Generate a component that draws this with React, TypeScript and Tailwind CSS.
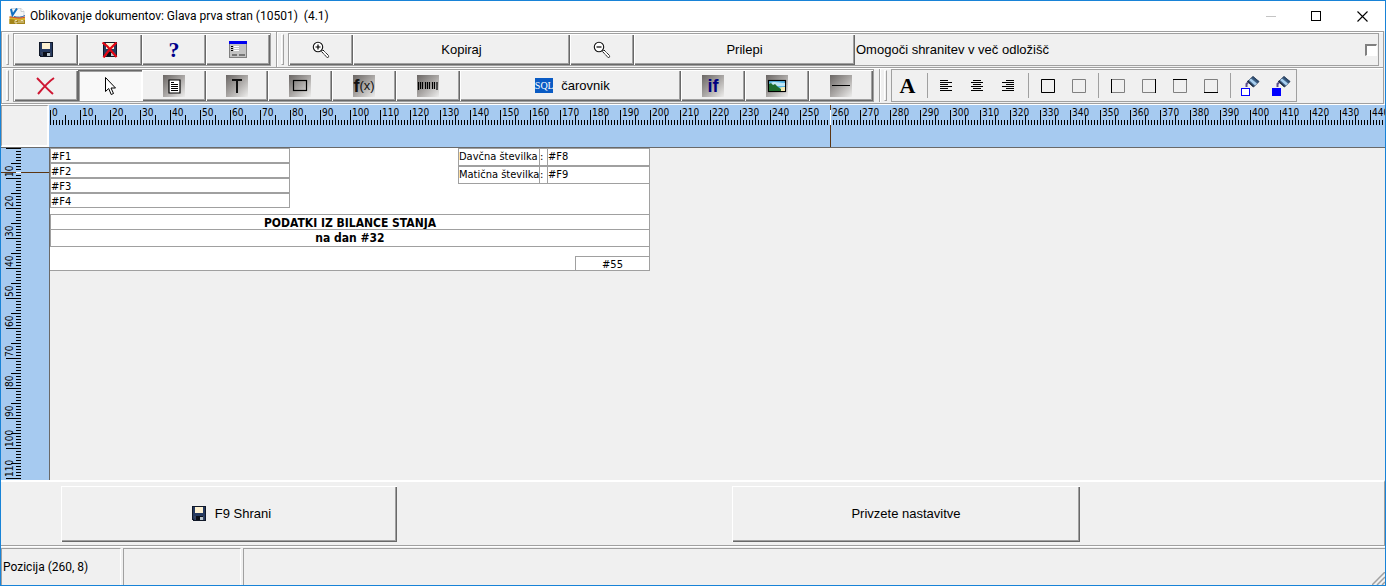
import { useEffect, useState } from "react";
import type { ReactNode } from "react";

const RAISED =
  "shadow-[inset_1px_1px_#ffffff,inset_-1px_-1px_#696969,inset_-2px_-2px_#a0a0a0]";

/* ---------- icons ---------- */

function Floppy({ crossed = false }: { crossed?: boolean }) {
  return (
    <svg width="16" height="16" viewBox="0 0 16 16" shapeRendering="crispEdges" aria-hidden="true">
      <path d="M1 0h14v15H2l-1-1z" fill="#101828" />
      <path d="M2 1h12v13H3l-1-1z" fill="#263a60" />
      <path d="M4 1h8v6H4z" fill="#fdf1d2" />
      <path d="M3 10h10v4H4z" fill="#3a4660" />
      <path d="M5 10h7v4H5z" fill="#0b0f18" />
      <path d="M9 11h3v3H9z" fill="#b9c6cf" />
      {crossed && (
        <path
          d="M0.500 0.500l5 4 9 10.500M14.500 0.500L8 7l-6.500 8.500"
          fill="none"
          stroke="#e30613"
          strokeWidth="2.200"
          shapeRendering="auto"
        />
      )}
    </svg>
  );
}

function AppLogo() {
  return (
    <svg width="17" height="17" viewBox="0 0 17 17" aria-hidden="true">
      <path d="M2 0.500h10l3 3V12H2z" fill="#f4f6f8" stroke="#c5cbd0" strokeWidth="0.7" />
      <path d="M12 0.500v3h3" fill="#ffffff" stroke="#b8bec4" strokeWidth="0.7" />
      <path d="M0.500 8.500c4 0 8 2 15.500 0.500v7H0.500z" fill="#d9b32a" />
      <path d="M0.500 11c4 0 9 2.500 15.500 1v4H0.500z" fill="#a3841a" />
      <path d="M5 8.500c4 1 7 1 11-1" fill="none" stroke="#2f6fb0" strokeWidth="1" />
      <path d="M0.500 9c4-0.500 8 2.500 15.500 0" fill="none" stroke="#d4402a" strokeWidth="1" />
      <path d="M8 12.500H6v2.500h2v-1M10 12.500v2.500M12 15v-2.500h2V15" stroke="#f6eecb" strokeWidth="0.800" fill="none" />
      <path d="M2 1l1.500 6L8 0.500" fill="none" stroke="#0f6ec0" strokeWidth="2" />
    </svg>
  );
}

function FormIcon() {
  return (
    <svg width="18" height="17" viewBox="0 0 18 17" shapeRendering="crispEdges" aria-hidden="true">
      <path d="M0 0h18v17H0z" fill="#808080" />
      <path d="M1 3h16v13H1z" fill="#c3c3c3" />
      <path d="M0 0h18v3H0z" fill="#0000f0" />
      <path d="M2 5h2v1H2zM2 7h2v1H2zM2 9h2v1H2z" fill="#000" />
      <path d="M5 5h5v1H5zM5 7h5v1H5zM5 9h5v1H5z" fill="#fff" />
      <path d="M3 13h5v2H3zM10 13h6v2h-6z" fill="#777" />
    </svg>
  );
}

function Magnifier({ plus = false }: { plus?: boolean }) {
  return (
    <svg width="18" height="18" viewBox="0 0 18 18" aria-hidden="true">
      <path d="M9.500 10.500l1.500-1.500 6 6-1.500 2z" fill="#fff" stroke="#000" strokeWidth="1" strokeDasharray="1.500 0.500" />
      <circle cx="6" cy="6" r="4.700" fill="#fff" stroke="#111" strokeWidth="1.100" />
      <path d={plus ? "M3.500 6h5M6 3.500v5" : "M3.500 6h5"} stroke="#000" strokeWidth="1.200" />
    </svg>
  );
}

function Tile({ children, id }: { children?: ReactNode; id: string }) {
  return (
    <svg width="22" height="22" viewBox="0 0 22 22" aria-hidden="true">
      <defs>
        <linearGradient id={id} x1="0" y1="0" x2="1" y2="1">
          <stop offset="0" stopColor="#6a6664" />
          <stop offset="0.500" stopColor="#a9a6a4" />
          <stop offset="1" stopColor="#ededec" />
        </linearGradient>
      </defs>
      <rect width="22" height="22" fill={`url(#${id})`} />
      {children}
    </svg>
  );
}

function Square({ sides }: { sides: "all" | "none" | "left" | "right" | "top" | "bottom" }) {
  const lines = {
    all: "M0.500 0.500h13v13h-13z",
    none: "",
    left: "M0.500 0v14",
    right: "M13.500 0v14",
    top: "M0 0.500h14",
    bottom: "M0 13.500h14",
  };
  return (
    <svg width="14" height="14" viewBox="0 0 14 14" aria-hidden="true">
      <path d="M0.500 0.500h13v13h-13z" fill="none" stroke="#808080" />
      <path d={lines[sides]} fill="none" stroke="#000" />
    </svg>
  );
}

function AlignIcon({ kind }: { kind: "left" | "center" | "right" }) {
  const widths = [8, 12, 8, 12, 8, 12];
  return (
    <svg width="13" height="12" viewBox="0 0 13 12" shapeRendering="crispEdges" aria-hidden="true">
      {widths.map((w, i) => {
        const x = kind === "left" ? 0 : kind === "center" ? (12 - w) / 2 : 12 - w;
        return <rect key={i} x={x} y={i * 2} width={w} height="1" fill="#000" />;
      })}
    </svg>
  );
}

function Bucket({ filled = false }: { filled?: boolean }) {
  return (
    <svg width="20" height="22" viewBox="0 0 20 22" aria-hidden="true">
      <path d="M13 1.500l6 5-5.500 5.500-6-5.500z" fill="#3f6288" stroke="#2b3d57" />
      <path d="M11 3.500l6 5-2 2-6-5.500z" fill="#a9d0f0" />
      <path d="M13 1.500l6 5-1 1-6-5z" fill="#2d4a6c" />
      <path d="M7.500 6l6 5.500" stroke="#1d2c42" strokeWidth="1.200" />
      <path d="M8 7.500L6.500 9v3" fill="none" stroke="#5a4f8c" strokeWidth="2" />
      <rect x="1.500" y="13.500" width="8" height="7" fill={filled ? "#0000ff" : "#fff"} stroke="#0000ff" />
    </svg>
  );
}

/* ---------- toolbar parts ---------- */

function Grip() {
  return (
    <span className="mr-1 ml-1 h-[31px] w-[3px] shrink-0 border-t border-r border-b border-l border-t-white border-r-[#a0a0a0] border-b-[#a0a0a0] border-l-white" />
  );
}

function Panel({ children, className = "" }: { children: ReactNode; className?: string }) {
  return (
    <div className={`flex h-[33px] border border-[#a0a0a0] ${className}`}>{children}</div>
  );
}

function ToolButton({
  label,
  children,
  className = "w-16",
  pressed = false,
}: {
  label: string;
  children: ReactNode;
  className?: string;
  pressed?: boolean;
}) {
  return (
    <button
      type="button"
      aria-label={label}
      aria-pressed={pressed || undefined}
      className={`flex h-[31px] shrink-0 items-center justify-center ${
        pressed
          ? "bg-[#f9f9f9] shadow-[inset_1px_1px_#696969,inset_2px_2px_#a0a0a0,inset_-1px_-1px_#ffffff]"
          : RAISED
      } ${className}`}
    >
      {children}
    </button>
  );
}

function FlatButton({ label, children }: { label: string; children: ReactNode }) {
  return (
    <button type="button" aria-label={label} className="flex h-[31px] w-[31px] shrink-0 items-center justify-center">
      {children}
    </button>
  );
}

function Divider() {
  return <span className="my-[3px] mr-[3px] ml-1 w-px shrink-0 bg-[#a0a0a0]" />;
}

function BandSplit() {
  return <span className="ml-[5px] w-px shrink-0 self-stretch bg-[#a0a0a0] shadow-[1px_0_#ffffff]" />;
}

/* ---------- rulers ---------- */

const UNIT = 3;

function tickLength(i: number) {
  return i % 10 === 0 ? 15 : i % 5 === 0 ? 10 : 5;
}

function useWindowSize() {
  const [size, setSize] = useState({ width: window.innerWidth, height: window.innerHeight });
  useEffect(() => {
    const update = () => setSize({ width: window.innerWidth, height: window.innerHeight });
    window.addEventListener("resize", update);
    return () => window.removeEventListener("resize", update);
  }, []);
  return size;
}

function HorizontalRuler({ cursor }: { cursor: number }) {
  const { width } = useWindowSize();
  const count = Math.floor((width - 52) / UNIT);
  let ticks = "";
  for (let i = 0; i <= count; i++) ticks += `M${i * UNIT + 1.5} 20v${-tickLength(i)}`;
  const marker = cursor * UNIT + 1.5;
  return (
    <div className="h-[42px] min-w-0 flex-1 overflow-hidden bg-[#a6caf0]">
      <svg width="100%" height="42" className="block" aria-label="Vodoravno ravnilo">
        <path d={ticks} stroke="#000" />
        {Array.from({ length: Math.floor(count / 10) + 1 }, (_, i) => (
          <text key={i} x={i * 10 * UNIT + 3} y="11" className="font-['DejaVu_Sans_Condensed','DejaVu_Sans',sans-serif] text-[10px]">
            {i * 10}
          </text>
        ))}
        <path d={`M${marker} 0v42`} stroke="#5c3512" />
        <path d={`M${marker} 5v15`} stroke="#fff" />
      </svg>
    </div>
  );
}

function VerticalRuler({ cursor }: { cursor: number }) {
  const { height } = useWindowSize();
  const count = Math.floor((height - 254) / UNIT);
  let ticks = "";
  for (let i = 0; i <= count; i++) ticks += `M20 ${i * UNIT + 0.5}h${-tickLength(i)}`;
  const marker = cursor * UNIT + 0.5;
  return (
    <div className="relative w-12 shrink-0 overflow-hidden bg-[#a6caf0]">
      <svg width="48" height="100%" className="absolute top-0 left-0 block" aria-label="Navpično ravnilo">
        <path d={ticks} stroke="#000" />
        {Array.from({ length: Math.floor(count / 10) }, (_, i) => {
          const y = (i + 1) * 10 * UNIT - 1;
          return (
            <text key={i} x="12" y={y} transform={`rotate(-90 12 ${y})`} className="font-['DejaVu_Sans_Condensed','DejaVu_Sans',sans-serif] text-[10px]">
              {(i + 1) * 10}
            </text>
          );
        })}
        <path d={`M0 ${marker}h48`} stroke="#5c3512" />
        <path d={`M15 ${marker}h5`} stroke="#fff" />
      </svg>
    </div>
  );
}

/* ---------- document canvas ---------- */

const FIELDS = [
  { text: "#F1", place: "left-0 top-0 w-[240px] h-[15px]" },
  { text: "#F2", place: "left-0 top-[15px] w-[240px] h-[15px]" },
  { text: "#F3", place: "left-0 top-[30px] w-[240px] h-[15px]" },
  { text: "#F4", place: "left-0 top-[45px] w-[240px] h-[15px]" },
  { text: "Davčna številka", place: "left-[408px] top-0 w-[82px] h-[18px]" },
  { text: ":", place: "left-[489px] top-0 w-[9px] h-[18px]" },
  { text: "#F8", place: "left-[497px] top-0 w-[103px] h-[18px]" },
  { text: "Matična številka", place: "left-[408px] top-[18px] w-[82px] h-[18px]" },
  { text: ":", place: "left-[489px] top-[18px] w-[9px] h-[18px]" },
  { text: "#F9", place: "left-[497px] top-[18px] w-[103px] h-[18px]" },
  { text: "PODATKI IZ BILANCE STANJA", place: "left-0 top-[66px] w-[600px] h-4 text-center text-xs font-bold" },
  { text: "na dan #32", place: "left-0 top-[81px] w-[600px] h-[18px] text-center text-xs font-bold" },
  { text: "#55", place: "left-[525px] top-[108px] w-[75px] h-[15px] text-center" },
];

function Canvas() {
  return (
    <div className="min-w-0 flex-1 overflow-hidden border-l border-[#696969]">
      <div className="relative h-[123px] w-[600px] border-r border-b border-[#a0a0a0] bg-white font-['DejaVu_Sans_Condensed','DejaVu_Sans',sans-serif] text-[11px]">
        {FIELDS.map((f, i) => (
          <div key={i} className={`absolute border border-[#a0a0a0] leading-4 whitespace-nowrap ${f.place}`}>
            {f.text}
          </div>
        ))}
      </div>
    </div>
  );
}

/* ---------- window ---------- */

export default function App() {
  return (
    <div className="flex min-h-screen flex-col border border-[#1883d7] bg-[#f0f0f0] font-['Liberation_Sans',Arial,sans-serif] text-[13px] text-black">
      <header className="flex h-[30px] items-center bg-white pl-2 font-['Roboto','Open_Sans',sans-serif] text-[12px]">
        <AppLogo />
        <h1 className="ml-1 flex-1 whitespace-pre">Oblikovanje dokumentov: Glava prva stran (10501)  (4.1)</h1>
        <button type="button" aria-label="Pomanjšaj" className="flex h-full w-[45px] items-center justify-center">
          <span className="h-px w-[10px] bg-[#c4c4c4]" />
        </button>
        <button type="button" aria-label="Povečaj" className="flex h-full w-[46px] items-center justify-center">
          <span className="h-[10px] w-[10px] border border-black" />
        </button>
        <button type="button" aria-label="Zapri" className="flex h-full w-[46px] items-center justify-center">
          <svg width="11" height="11" viewBox="0 0 11 11" aria-hidden="true">
            <path d="M0.500 0.500l10 10M10.500 0.500l-10 10" stroke="#000" strokeWidth="1.100" />
          </svg>
        </button>
      </header>

      <div className="mr-px border border-[#a0a0a0] shadow-[inset_1px_1px_#ffffff]">
        <div className="flex items-center border-b border-[#a0a0a0]">
          <div className="flex flex-none items-center py-px">
            <Grip />
            <Panel>
              <ToolButton label="Shrani"><Floppy /></ToolButton>
              <ToolButton label="Zapri brez shranjevanja"><Floppy crossed /></ToolButton>
              <ToolButton label="Pomoč">
                <span className="font-['Liberation_Serif',serif] text-[22px] leading-none font-bold text-[#00008b]">?</span>
              </ToolButton>
              <ToolButton label="Lastnosti"><FormIcon /></ToolButton>
            </Panel>
          </div>
          <BandSplit />
          <div className="flex min-w-0 flex-1 items-center py-px pr-1">
            <Grip />
            <Panel className="min-w-0 flex-1">
              <ToolButton label="Povečava"><Magnifier plus /></ToolButton>
              <ToolButton label="Kopiraj" className="w-[217px]">Kopiraj</ToolButton>
              <ToolButton label="Pomanjšava"><Magnifier /></ToolButton>
              <ToolButton label="Prilepi" className="w-[221px]">Prilepi</ToolButton>
              <label className="flex min-w-0 flex-1 items-center justify-between pr-px pl-px">
                <span className="whitespace-nowrap">Omogoči shranitev v več odložišč</span>
                <input
                  type="checkbox"
                  className="h-3 w-3 appearance-none border-t-2 border-r border-b border-l-2 border-t-[#808080] border-r-white border-b-white border-l-[#808080] bg-white"
                />
              </label>
            </Panel>
          </div>
        </div>

        <div className="flex items-center border-t border-white pb-px">
          <div className="flex items-center">
            <Grip />
            <Panel>
              <ToolButton label="Briši">
                <svg width="20" height="20" viewBox="0 0 20 20" aria-hidden="true">
                  <path d="M1 2c5 5 10 11 16 16M18 2C12 6 7 12 2 18" fill="none" stroke="#cf1632" strokeWidth="2" />
                </svg>
              </ToolButton>
              <ToolButton label="Izbira" pressed>
                <svg width="13" height="20" viewBox="0 0 13 20" aria-hidden="true">
                  <path d="M1.500 1.500v14l3.200-3 2.500 6 2.300-1-2.500-5.500h4.500z" fill="#fff" stroke="#000" />
                </svg>
              </ToolButton>
              <ToolButton label="Besedilo">
                <Tile id="tile-memo">
                  <path d="M6 5h11v13H6z" fill="#fff" stroke="#000" strokeWidth="1.200" />
                  <path d="M8 7.500h3M8 9.500h7M8 11.500h7M8 13.500h7M8 15.500h7" stroke="#000" />
                </Tile>
              </ToolButton>
              <ToolButton label="Napis" className="w-[62px]">
                <Tile id="tile-text">
                  <path d="M6 4h10v2h-4v12h-2V6H6z" fill="#111" />
                </Tile>
              </ToolButton>
              <ToolButton label="Okvir">
                <Tile id="tile-box">
                  <rect x="4.500" y="5.500" width="13" height="10" fill="none" stroke="#000" strokeWidth="1.200" />
                </Tile>
              </ToolButton>
              <ToolButton label="Formula">
                <span className="flex h-[22px] w-[22px] items-center justify-center bg-linear-to-br from-[#6a6664] via-[#a9a6a4] to-[#ededec] text-[13px] leading-none text-[#111]">
                  <b className="text-[18px]">f</b>(x)
                </span>
              </ToolButton>
              <ToolButton label="Črtna koda">
                <Tile id="tile-barcode">
                  <path
                    d="M1.500 7v8M3.500 7v7M5.500 7v7M8.500 7v7M10.500 7v7M12.500 7v7M15.500 7v7M17.500 7v7M20 7v8"
                    stroke="#000"
                    strokeWidth="1.200"
                  />
                </Tile>
              </ToolButton>
              <ToolButton label="SQL čarovnik" className="w-[221px] gap-2 pl-1">
                <span className="flex h-[15px] w-[18px] items-center justify-center bg-[#0a5bc4] font-['Liberation_Serif',serif] text-[10px] leading-none text-white">
                  SQL
                </span>
                čarovnik
              </ToolButton>
              <ToolButton label="Pogoj">
                <span className="flex h-[22px] w-[22px] items-center justify-center bg-linear-to-br from-[#6a6664] via-[#a9a6a4] to-[#ededec] text-[18px] leading-none font-bold text-[#000080]">
                  if
                </span>
              </ToolButton>
              <ToolButton label="Slika">
                <Tile id="tile-image">
                  <rect x="2.500" y="5.500" width="17" height="11" fill="#58b8e8" stroke="#000" strokeWidth="1.200" />
                  <path d="M3 9c5-4 9-1 16-1v3H3z" fill="#bfe6f5" />
                  <path d="M19 12c-6 0-8 2-9 4h9z" fill="#f4e9b0" />
                  <path d="M3 9l2-1 2 2 2-1 3 3 3 2v2H3z" fill="#1d6b2e" />
                </Tile>
              </ToolButton>
              <ToolButton label="Črta">
                <Tile id="tile-line">
                  <path d="M2 10.500h18" stroke="#000" />
                </Tile>
              </ToolButton>
            </Panel>
          </div>
          <BandSplit />
          <div className="flex items-center">
            <Grip />
            <Panel>
              <FlatButton label="Pisava">
                <span className="font-['Liberation_Serif',serif] text-[22px] leading-none font-bold">A</span>
              </FlatButton>
              <Divider />
              <FlatButton label="Poravnaj levo"><AlignIcon kind="left" /></FlatButton>
              <FlatButton label="Poravnaj na sredino"><AlignIcon kind="center" /></FlatButton>
              <FlatButton label="Poravnaj desno"><AlignIcon kind="right" /></FlatButton>
              <Divider />
              <FlatButton label="Vsi robovi"><Square sides="all" /></FlatButton>
              <FlatButton label="Brez robov"><Square sides="none" /></FlatButton>
              <Divider />
              <FlatButton label="Levi rob"><Square sides="left" /></FlatButton>
              <FlatButton label="Desni rob"><Square sides="right" /></FlatButton>
              <FlatButton label="Zgornji rob"><Square sides="top" /></FlatButton>
              <FlatButton label="Spodnji rob"><Square sides="bottom" /></FlatButton>
              <Divider />
              <FlatButton label="Barva ozadja"><Bucket /></FlatButton>
              <FlatButton label="Barva črte"><Bucket filled /></FlatButton>
            </Panel>
          </div>
        </div>
      </div>

      <main className="flex flex-1 flex-col border-t border-white">
        <div className="flex border-b border-[#696969]">
          <div className="w-12 shrink-0 border-t border-r-2 border-b-2 border-l border-t-[#a0a0a0] border-r-white border-b-white border-l-[#a0a0a0]" />
          <HorizontalRuler cursor={260} />
        </div>
        <div className="flex flex-1">
          <VerticalRuler cursor={8} />
          <Canvas />
        </div>
      </main>

      <section className="flex h-[66px] items-center border-t-2 border-r border-b border-t-white border-r-[#a0a0a0] border-b-[#a0a0a0] pl-[60px]">
        <button type="button" className={`mr-[335px] flex h-14 w-[336px] items-center justify-center gap-2 pl-1 ${RAISED}`}>
          <Floppy />
          F9 Shrani
        </button>
        <button type="button" className={`flex h-14 w-[348px] items-center justify-center ${RAISED}`}>
          Privzete nastavitve
        </button>
      </section>

      <footer className="flex h-[39px] gap-[2px] border-t border-white pt-px font-['Roboto','Open_Sans',sans-serif] text-[12px]">
        <div className="flex w-[120px] items-center border-t border-r border-l border-t-[#a0a0a0] border-r-white border-l-[#a0a0a0] pl-px whitespace-nowrap">
          Pozicija (260, 8)
        </div>
        <div className="w-[118px] border-t border-r border-l border-t-[#a0a0a0] border-r-white border-l-[#a0a0a0]" />
        <div className="flex flex-1 items-end justify-end border-t border-l border-[#a0a0a0]">
          <svg width="13" height="13" viewBox="0 0 13 13" aria-hidden="true">
            <path d="M0 13L13 0M5 13l8-8M10 13l3-3" stroke="#a0a0a0" strokeWidth="1.500" />
          </svg>
        </div>
      </footer>
    </div>
  );
}
